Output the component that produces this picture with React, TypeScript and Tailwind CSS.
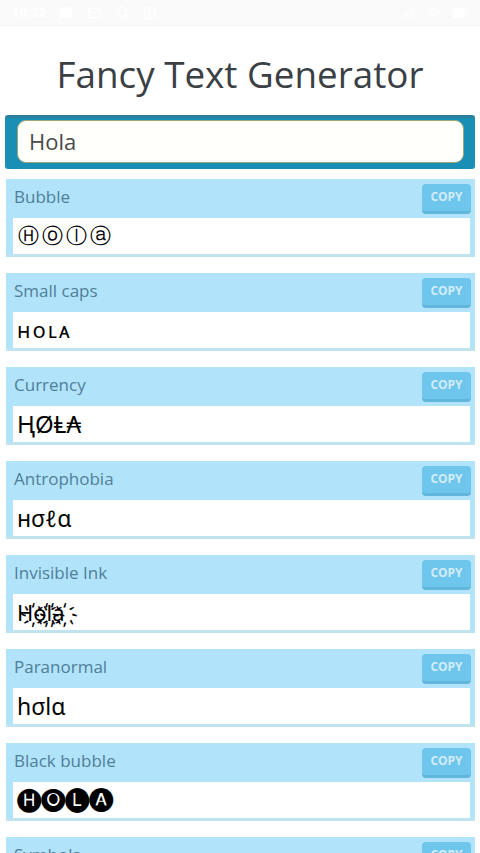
import { BatteryFull, Bell, Image, Mail, MessageSquare, Signal, Wifi } from 'lucide-react';

const styles = [
	{ name: 'Bubble', text: 'Ⓗⓞⓛⓐ', cls: 'text-[21px] tracking-[3px] pl-[5px] pb-[1px]' },
	{ name: 'Small caps', text: 'ʜᴏʟᴀ', cls: 'text-[21px] tracking-[2px] font-["Noto_Sans","DejaVu_Sans",sans-serif]' },
	{ name: 'Currency', text: 'ⱧØⱠ₳', cls: 'text-[24px] pb-[1px] font-["Noto_Sans","DejaVu_Sans",sans-serif]' },
	{ name: 'Antrophobia', text: 'нσℓα', cls: 'text-[23px] font-["Noto_Sans","DejaVu_Sans",sans-serif]' },
	{ name: 'Invisible Ink', text: 'H҉o҉l҉a҉', cls: 'text-[22px] font-["Noto_Sans","DejaVu_Sans",sans-serif]' },
	{ name: 'Paranormal', text: 'hσlɑ', cls: 'text-[23px] font-["Noto_Sans","DejaVu_Sans",sans-serif]' },
	{ name: 'Black bubble', text: '🅗🅞🅛🅐', cls: 'text-[24px] pb-[5px] font-["DejaVu_Sans",sans-serif]' },
	{ name: 'Symbols', text: '', cls: '' },
];

function StyleCard({ name, text, cls }: { name: string; text: string; cls: string }) {
	return (
		<div className="ml-[6px] mr-[5px] bg-[#b1e3fa] border-b-[3px] border-[#bfe4f0] pr-[4px] pl-[7px] shrink-0">
			<div className="h-[39px] flex items-center justify-between">
				<span className="text-[17px] text-[#4f7f99] pl-px -mt-[3px]">{name}</span>
				<button className="w-[49px] h-[30px] rounded-[4px] bg-[#6ec6ec] border-b-[3px] border-[#62b6dc] text-white/70 text-[12px] font-bold">
					COPY
				</button>
			</div>
			<div className={`h-[36px] mr-px bg-white flex items-center px-[4px] text-black leading-none ${cls}`}>
				{text}
			</div>
		</div>
	);
}

export default function App() {
	return (
		<div className='w-[480px] h-[853px] overflow-hidden bg-white flex flex-col font-["Open_Sans",sans-serif]'>
			<div className="h-[26px] bg-[#fafafa] border-b border-[#f5f5f5] shrink-0 flex items-center justify-between px-[12px] text-white">
				<div className="flex items-center gap-[14px]">
					<span className="text-[13px] font-bold">10:32</span>
					<MessageSquare size={14} fill="white" />
					<Mail size={14} />
					<Bell size={14} />
					<Image size={14} />
				</div>
				<div className="flex items-center gap-[12px]">
					<Signal size={14} />
					<Wifi size={14} />
					<BatteryFull size={16} fill="white" />
				</div>
			</div>
			<h1 className="h-[89px] pt-[8px] flex items-center justify-center text-[36.8px] text-[#3b4045] shrink-0">
				Fancy Text Generator
			</h1>
			<div className="mx-[5px] h-[54px] bg-[#1a8fb6] border-t-[3px] border-[#2a7f9c] rounded-[3px] pl-[12px] pr-[11px] pt-[2px] shrink-0">
				<div className="h-[43px] bg-[#fffffc] rounded-[9px] border border-[#a3a873] flex items-center px-[11px] text-[22px] text-[#4a4a4a]">
					Hola
				</div>
			</div>
			<div className="flex flex-col gap-[16px] mt-[10px]">
				{styles.map((s) => (
					<StyleCard key={s.name} name={s.name} text={s.text} cls={s.cls} />
				))}
			</div>
		</div>
	);
}
